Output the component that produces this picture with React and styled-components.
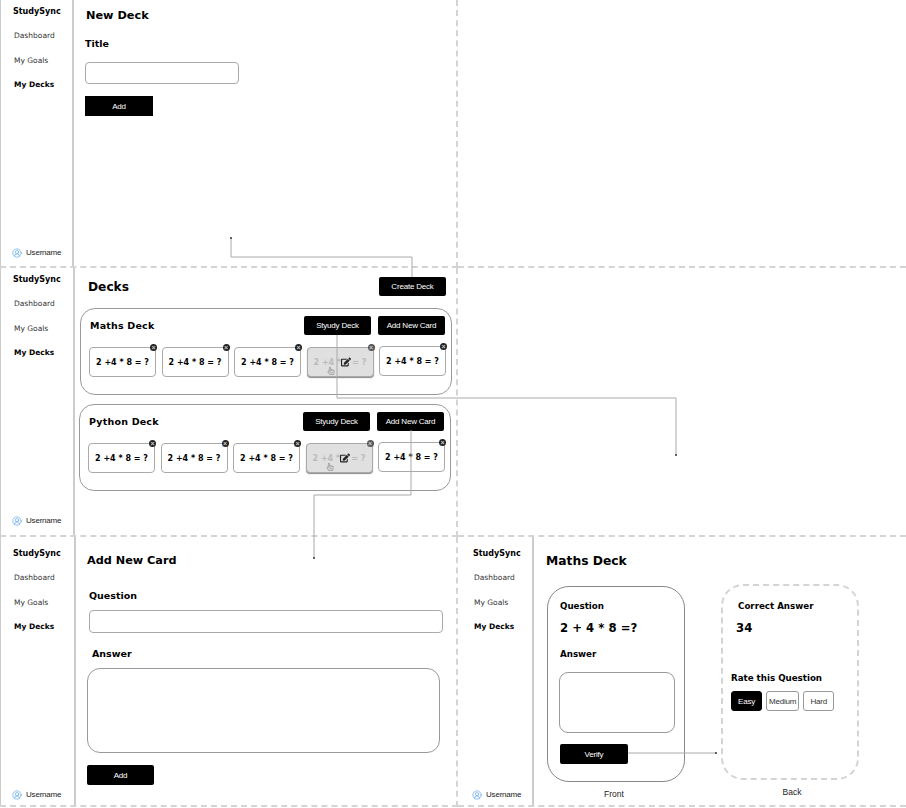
import React from "react";
import styled, { createGlobalStyle } from "styled-components";
import { CircleUserRound } from "lucide-react";
import { FaEdit, FaRegHandPointer } from "react-icons/fa";

const GlobalStyle = createGlobalStyle`
  html, body {
    margin: 0;
    padding: 0;
    background: #fff;
  }
  body {
    font-family: "DejaVu Sans", sans-serif;
    color: #000;
  }
`;

const Sidebar = ({ top, bottom, left, width }) => (
  <Side $top={top} $bottom={bottom} $left={left} $width={width}>
    <Brand>StudySync</Brand>
    <Nav>
      <NavItem>Dashboard</NavItem>
      <NavItem>My Goals</NavItem>
      <NavItem $active>My Decks</NavItem>
    </Nav>
    <User>
      <CircleUserRound size={10} color="#5aa5e8" strokeWidth={1.6} />
      <span>Username</span>
    </User>
  </Side>
);

const Card = ({ hover, raised }) => (
  <CardBox $hover={hover} $raised={raised}>
    <Close $hover={hover}>×</Close>
    <span>2 +4 * 8 = ?</span>
    {hover && (
      <>
        <EditIcon>
          <FaEdit size={10} color="#222" />
        </EditIcon>
        <HandIcon>
          <FaRegHandPointer size={8} color="#999" />
        </HandIcon>
      </>
    )}
  </CardBox>
);

const Deck = ({ name, shift, top }) => (
  <DeckPanel $shift={shift} $top={top}>
    <DeckHead>
      <DeckName>{name}</DeckName>
      <DeckActions>
        <Button $w={67}>Styudy Deck</Button>
        <Button $w={67}>Add New Card</Button>
      </DeckActions>
    </DeckHead>
    <CardRow>
      <Card />
      <Card />
      <Card />
      <Card hover />
      <Card raised />
    </CardRow>
  </DeckPanel>
);

export default function App() {
  return (
    <>
      <GlobalStyle />
      <Board>
        <Frame $right>
          <Sidebar top={6} bottom={8} width={74} />
          <NewDeck>
            <Heading $size={11.3} $left={1}>
              New Deck
            </Heading>
            <Label $top={13}>Title</Label>
            <TextInput $w={154} $h={22} $top={12} />
            <Button $w={68} $h={20} $square $top={12}>
              Add
            </Button>
          </NewDeck>
        </Frame>
        <EmptyCell />

        <Frame $right>
          <Sidebar top={6} bottom={9} width={75} />
          <DeckList>
            <DecksHead>
              <Heading $size={12.2}>Decks</Heading>
              <Button $w={67}>Create Deck</Button>
            </DecksHead>
            <Deck name="Maths Deck" shift={1} top={12} />
            <Deck name="Python Deck" shift={0} top={9} />
          </DeckList>
        </Frame>
        <EmptyCell />

        <Frame $right>
          <Sidebar top={11} bottom={5} width={76} />
          <NewCard>
            <Heading $size={11.25} $left={-2}>
              Add New Card
            </Heading>
            <Label $top={20}>Question</Label>
            <TextInput $w={354} $h={23} $top={8} />
            <Label $top={14} $indent={3}>
              Answer
            </Label>
            <TextArea $w={353} $h={85} $top={8} $left={-2} />
            <Button $w={67} $h={20} $top={12} $left={-2}>
              Add
            </Button>
          </NewCard>
        </Frame>

        <Frame>
          <Sidebar top={11} bottom={5} left={15} width={76} />
          <Study>
            <Heading $size={12.3}>Maths Deck</Heading>
            <Faces>
              <Face>
                <FaceBox $top={13}>
                  <FaceLabel>Question</FaceLabel>
                  <QuestionText>2 + 4 * 8 =?</QuestionText>
                  <FaceLabel $top={12}>Answer</FaceLabel>
                  <TextArea $w={116} $h={61} $top={12} $left={-1} $radius={9} />
                  <Button $w={68} $h={20} $top={11}>
                    Verify
                  </Button>
                </FaceBox>
                <Caption $nudge={-4}>Front</Caption>
              </Face>
              <Face>
                <FaceBox $dashed $top={14}>
                  <FaceLabel>Correct Answer</FaceLabel>
                  <QuestionText $indent={-2}>34</QuestionText>
                  <FaceLabel $top={36} $indent={-7}>
                    Rate this Question
                  </FaceLabel>
                  <Ratings>
                    <Rating $active>Easy</Rating>
                    <Rating>Medium</Rating>
                    <Rating>Hard</Rating>
                  </Ratings>
                </FaceBox>
                <Caption $nudge={4}>Back</Caption>
              </Face>
            </Faces>
          </Study>
        </Frame>

        <Connectors viewBox="0 0 906 808">
          <polyline points="412,277 412,257 231,257 231,238" />
          <polyline points="337,335 337,398 676,398 676,455" />
          <polyline points="411,430 411,495 314,495 314,558" />
          <polyline points="628,753 716,753" />
          <circle cx="231" cy="238" r="1" />
          <circle cx="676" cy="455" r="1" />
          <circle cx="314" cy="558" r="1" />
          <circle cx="716" cy="753" r="1" />
        </Connectors>
      </Board>
    </>
  );
}

const Board = styled.div`
  position: relative;
  width: 906px;
  height: 808px;
  display: grid;
  grid-template-columns: 458px 448px;
  grid-template-rows: 268px 269px 270px;
  overflow: hidden;
`;

const Frame = styled.section`
  display: flex;
  min-width: 0;
  border-bottom: 2px dashed #d4d4d4;
  ${(p) => p.$right && "border-right: 2px dashed #d4d4d4;"}
`;

const EmptyCell = styled.div`
  border-bottom: 2px dashed #d4d4d4;
`;

const Side = styled.aside`
  box-sizing: border-box;
  flex: none;
  width: ${(p) => p.$width}px;
  display: flex;
  flex-direction: column;
  padding: ${(p) => p.$top}px 0 ${(p) => p.$bottom}px ${(p) => p.$left || 12}px;
  border-right: 2px solid #ccc;
  ${(p) => !p.$left && "border-left: 1px solid #ccc;"}
`;

const Brand = styled.div`
  font-size: 8px;
  font-weight: 700;
  line-height: 11px;
`;

const Nav = styled.nav`
  display: flex;
  flex-direction: column;
  gap: 13.5px;
  margin: 13px 0 0 1px;
`;

const NavItem = styled.div`
  font-size: 7.5px;
  line-height: 11px;
  font-weight: ${(p) => (p.$active ? 700 : 400)};
  color: ${(p) => (p.$active ? "#000" : "#333")};
`;

const User = styled.div`
  display: flex;
  align-items: center;
  gap: 4px;
  margin-top: auto;
  margin-left: -1px;
  font-family: "Liberation Sans", sans-serif;
  font-size: 8px;
  letter-spacing: -0.2px;
  line-height: 11px;
  color: #222;
`;

const Heading = styled.h2`
  margin: 0 0 0 ${(p) => p.$left || 0}px;
  font-size: ${(p) => p.$size}px;
  font-weight: 700;
  line-height: 16px;
`;

const Label = styled.div`
  font-size: 9.5px;
  font-weight: 700;
  line-height: 13px;
  margin-top: ${(p) => p.$top || 0}px;
  margin-left: ${(p) => p.$indent || 0}px;
`;

const TextInput = styled.div`
  box-sizing: border-box;
  width: ${(p) => p.$w}px;
  height: ${(p) => p.$h}px;
  margin-top: ${(p) => p.$top}px;
  border: 1px solid #aaa;
  border-radius: 4px;
`;

const TextArea = styled.div`
  box-sizing: border-box;
  width: ${(p) => p.$w}px;
  height: ${(p) => p.$h}px;
  margin-top: ${(p) => p.$top}px;
  margin-left: ${(p) => p.$left || 0}px;
  border: 1px solid #999;
  border-radius: ${(p) => p.$radius || 13}px;
`;

const Button = styled.div`
  box-sizing: border-box;
  flex: none;
  width: ${(p) => p.$w}px;
  height: ${(p) => p.$h || 19}px;
  margin-top: ${(p) => p.$top || 0}px;
  margin-left: ${(p) => p.$left || 0}px;
  display: flex;
  align-items: center;
  justify-content: center;
  background: #000;
  border-radius: ${(p) => (p.$square ? 0 : 2)}px;
  color: #fff;
  font-family: "Liberation Sans", sans-serif;
  font-size: 8px;
  letter-spacing: -0.2px;
`;

const NewDeck = styled.div`
  display: flex;
  flex-direction: column;
  align-items: flex-start;
  padding: 8px 0 0 11px;
`;

const DeckList = styled.div`
  flex: 1;
  min-width: 0;
  display: flex;
  flex-direction: column;
  padding: 9px 0 0 4px;
`;

const DecksHead = styled.div`
  display: flex;
  align-items: center;
  justify-content: space-between;
  width: 367px;
  padding-left: 9px;
  box-sizing: border-box;
`;

const DeckPanel = styled.div`
  box-sizing: border-box;
  width: 372px;
  height: 87px;
  margin-top: ${(p) => p.$top}px;
  margin-left: ${(p) => p.$shift}px;
  padding: 7px 6px 0 9px;
  border: 1px solid #999;
  border-radius: 15px;
`;

const DeckHead = styled.div`
  display: flex;
  align-items: center;
  justify-content: space-between;
`;

const DeckName = styled.div`
  font-size: 9.5px;
  font-weight: 700;
  letter-spacing: 0.2px;
`;

const DeckActions = styled.div`
  display: flex;
  gap: 7px;
`;

const CardRow = styled.div`
  display: flex;
  gap: 5.5px;
  margin: 12px 0 0 -1px;
`;

const CardBox = styled.div`
  position: relative;
  box-sizing: border-box;
  flex: none;
  width: 67px;
  height: 30px;
  margin-top: ${(p) => (p.$raised ? -1 : 0)}px;
  display: flex;
  align-items: center;
  justify-content: center;
  border: 1px solid #aaa;
  border-radius: 4px;
  background: ${(p) => (p.$hover ? "#e0e0e0" : "#fff")};
  box-shadow: ${(p) => (p.$hover ? "0 1px 1px #888" : "none")};
  color: ${(p) => (p.$hover ? "#bbb" : "#000")};
  font-size: 8px;
  font-weight: 700;
  white-space: nowrap;
`;

const Close = styled.span`
  position: absolute;
  top: -4px;
  right: -2px;
  width: 7px;
  height: 7px;
  display: flex;
  align-items: center;
  justify-content: center;
  border-radius: 50%;
  background: ${(p) => (p.$hover ? "#555" : "#222")};
  color: #ccc;
  font-family: "Liberation Sans", sans-serif;
  font-size: 7px;
  line-height: 7px;
`;

const EditIcon = styled.span`
  position: absolute;
  left: 33px;
  top: 9px;
  display: flex;
  background: #e0e0e0;
`;

const HandIcon = styled.span`
  position: absolute;
  left: 19px;
  top: 19px;
  display: flex;
`;

const NewCard = styled.div`
  display: flex;
  flex-direction: column;
  align-items: flex-start;
  padding: 16px 0 0 13px;
`;

const Study = styled.div`
  flex: 1;
  min-width: 0;
  display: flex;
  flex-direction: column;
  padding: 16px 0 0 12px;
`;

const Faces = styled.div`
  display: flex;
  gap: 36px;
  margin-top: 17px;
  margin-left: 1px;
`;

const Face = styled.div`
  display: flex;
  flex-direction: column;
  width: 138px;
  &:last-child {
    margin-top: -2px;
  }
`;

const FaceBox = styled.div`
  box-sizing: border-box;
  height: 196px;
  display: flex;
  flex-direction: column;
  align-items: flex-start;
  padding: ${(p) => p.$top}px 0 0 12px;
  border: 1px ${(p) => (p.$dashed ? "dashed #d4d4d4" : "solid #888")};
  ${(p) => p.$dashed && "border-width: 2px; padding-left: 15px;"}
  border-radius: 22px;
`;

const FaceLabel = styled.div`
  font-size: 8.7px;
  font-weight: 700;
  line-height: 12px;
  margin-top: ${(p) => p.$top || 0}px;
  margin-left: ${(p) => p.$indent || 0}px;
`;

const QuestionText = styled.div`
  font-size: 11.7px;
  font-weight: 700;
  line-height: 15px;
  margin-top: 9px;
  margin-left: ${(p) => p.$indent || 0}px;
`;

const Ratings = styled.div`
  display: flex;
  gap: 4px;
  margin: 7px 0 0 -7px;
`;

const Rating = styled.div`
  box-sizing: border-box;
  height: 20px;
  min-width: 31px;
  padding: 0 2px;
  display: flex;
  align-items: center;
  justify-content: center;
  border: 1px solid ${(p) => (p.$active ? "#000" : "#999")};
  border-radius: 3px;
  background: ${(p) => (p.$active ? "#000" : "#fff")};
  color: ${(p) => (p.$active ? "#fff" : "#333")};
  font-family: "Liberation Sans", sans-serif;
  font-size: 8px;
  letter-spacing: -0.2px;
`;

const Caption = styled.div`
  margin-top: 7px;
  margin-left: ${(p) => p.$nudge}px;
  text-align: center;
  font-family: "Liberation Sans", sans-serif;
  font-size: 8.5px;
  line-height: 11px;
  color: #222;
`;

const Connectors = styled.svg`
  position: absolute;
  inset: 0;
  width: 906px;
  height: 808px;
  pointer-events: none;
  polyline {
    fill: none;
    stroke: #aaa;
    stroke-width: 1;
  }
  circle {
    fill: #333;
  }
`;
